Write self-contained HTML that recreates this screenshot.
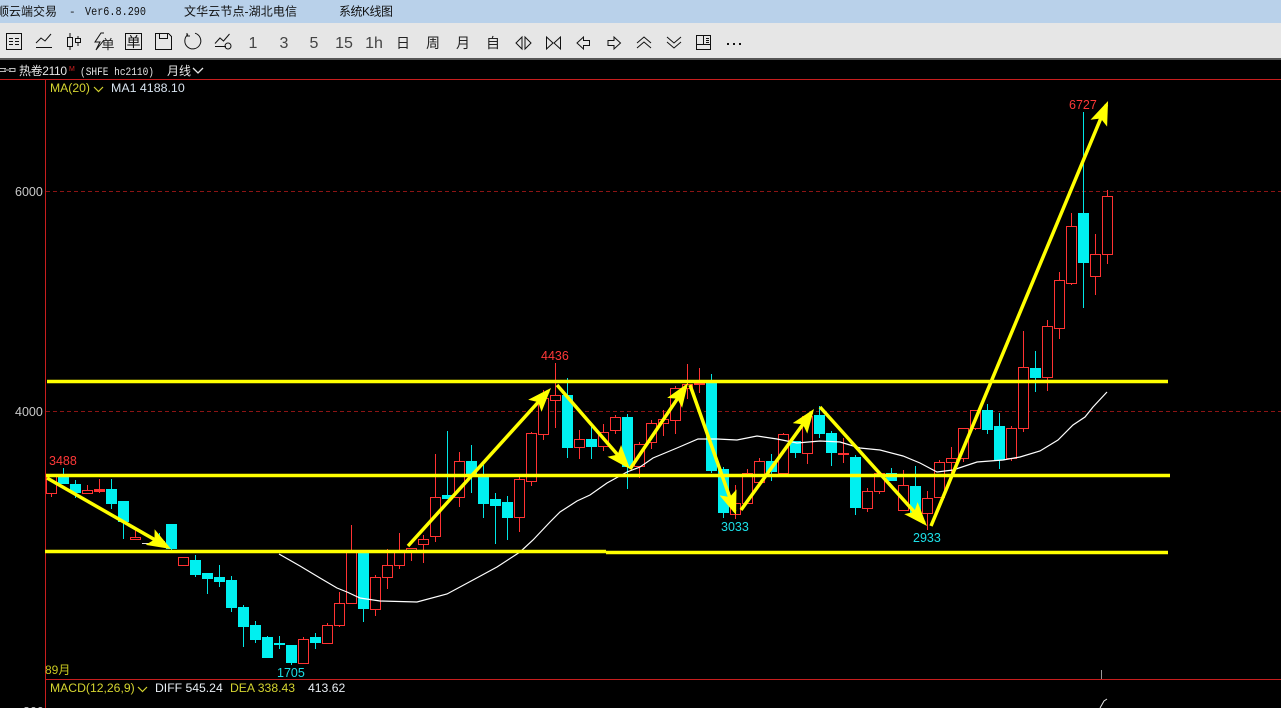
<!DOCTYPE html>
<html><head><meta charset="utf-8"><style>
html,body{margin:0;padding:0;background:#000;width:1281px;height:708px;overflow:hidden}
svg{display:block;font-family:"Liberation Sans","Noto Sans CJK SC",sans-serif}
</style></head><body>
<svg width="1281" height="708" viewBox="0 0 1281 708" xmlns="http://www.w3.org/2000/svg">
<defs><marker id="a" markerUnits="userSpaceOnUse" markerWidth="30" markerHeight="24" refX="20" refY="12" orient="auto"><path d="M0 3L24 12L0 21L5 12z" fill="#ff0"/></marker></defs>
<rect width="1281" height="708" fill="#000"/>
<rect width="1281" height="23" fill="#b9d1ea"/>
<rect y="23" width="1281" height="35" fill="#e6e6e6"/>
<rect y="58" width="1281" height="2" fill="#555"/>
<g font-size="12" fill="#111">
<text x="-3" y="15.500">顺云端交易</text>
<text x="69" y="15" font-family="Liberation Mono,monospace" font-size="11">-</text>
<text x="85" y="15" font-family="Liberation Mono,monospace" font-size="11.500" textLength="61" lengthAdjust="spacingAndGlyphs">Ver6.8.290</text>
<text x="184" y="15.500" textLength="113">文华云节点-湖北电信</text>
<text x="339" y="15.500" textLength="54">系统K线图</text>
</g>
<!-- toolbar icons -->
<g fill="none" stroke="#111" stroke-width="1" shape-rendering="crispEdges">
<path d="M6.500 33.500h15v16h-15zM9 38.500h4M15 38.500h4M9 41.500h4M15 41.500h4M9 44.500h4M15 44.500h4"/>
<path d="M36 47.500h16"/>
<path d="M67.500 37.500h5v9h-5zM70 33v4M70 46v4M75.500 38.500h5v4h-5zM78 36v2M78 43v3"/>
<path d="M125.500 33.500h16v16h-16zM155.500 33.500h13l3 3v13h-16zM159.500 33.500v5h8v-5"/>
<path d="M215 46.500h11M696.500 35.500h14v14h-14zM703.500 36v8M697 44.500h14M706 38.500h3M706 40.500h3M706 42.500h3"/>
</g>
<g fill="none" stroke="#111" stroke-width="1">
<path d="M36 43l5-5 4 3 6-7"/>
<path d="M104 33h-3l-6 9h5l-4 8l8-10"/>
<path d="M188 34.500A8 8 0 1 0 195 33.200M187 33v3h3"/>
<path d="M215 43.500l5-5.500 3.500 3 6-7"/>
<circle cx="228" cy="46" r="3"/>
<path d="M522 37l-6 6 6 6zM525 37l6 6-6 6z"/>
<path d="M546.500 37l6.500 6-6.500 6zM560.500 37l-6.500 6 6.500 6z"/>
<path d="M577 43l6.500-6v3.500h6v5h-6v3.500z"/>
<path d="M620.500 43l-6.500-6v3.500h-6v5h6v3.500z"/>
<path d="M637 43l7-6 7 6M637 48l7-6 7 6"/>
<path d="M667 37l7 6 7-6M667 42l7 6 7-6"/>
</g>
<g fill="#111"><rect x="727" y="43" width="2" height="2"/><rect x="733" y="43" width="2" height="2"/><rect x="739" y="43" width="2" height="2"/></g>
<g fill="#444" font-size="16" text-anchor="middle">
<text x="108" y="49" font-size="13" fill="#222">单</text>
<text x="133.500" y="47" font-size="14" fill="#111">单</text>
<text x="253" y="48">1</text><text x="284" y="48">3</text><text x="314" y="48">5</text>
<text x="344" y="48">15</text><text x="374" y="48">1h</text>
<text x="403" y="48" font-size="14" fill="#222">日</text><text x="433" y="48" font-size="14" fill="#222">周</text>
<text x="463" y="48" font-size="14" fill="#222">月</text><text x="493" y="48" font-size="14" fill="#222">自</text>
</g>
<!-- header / panel frame -->
<g fill="#e6e6e6" font-size="12">
<path d="M0 68.500h6M0 71.500h6M4 70h7M9 68.500h6v3h-6" fill="none" stroke="#bbb"/>
<text x="19" y="75" textLength="48">热卷2110</text>
<text x="69" y="71" font-size="7" fill="#d02020">M</text>
<text x="80" y="75" font-family="Liberation Mono,monospace" font-size="11" textLength="74" lengthAdjust="spacingAndGlyphs">(SHFE hc2110)</text>
<text x="167" y="75">月线</text>
<path d="M193 68l5 5 5-5" fill="none" stroke="#e6e6e6" stroke-width="1.300"/>
</g>
<g fill="#c81e1e"><rect y="79" width="1281" height="1"/><rect x="45" y="79" width="1" height="629"/><rect x="45" y="679" width="1236" height="1"/></g>
<path d="M46 191.500H1281M46 411.500H1281" stroke="#8c1414" stroke-dasharray="4 3" fill="none"/>
<!-- wicks -->
<path fill="none" stroke="#00e6e6" d="M63.500 468V484M75.500 480V498M111.500 479V509M123.500 501V539M159.500 533V544M171.500 524V553M195.500 555V577M207.500 573V594M219.500 565V587M231.500 576V612M243.500 605V647M255.500 621V643M267.500 636V658M279.500 636V649M291.500 645V665M315.500 633V649M363.500 552V622M447.500 431V499M471.500 445V493M483.500 465V518M495.500 493V544M507.500 496V540M567.500 378V458M591.500 427V459M627.500 414V489M711.500 374V473M723.500 467V518M771.500 454V481M795.500 441V458M819.500 406V438M831.500 431V466M855.500 455V515M891.500 468V481M915.500 466V513M987.500 404V434M999.500 413V469M1035.500 351V392M1083.500 112V308"/>
<path fill="none" stroke="#ff3232" d="M51.500 475V497M87.500 485V494M99.500 479V493M135.500 527V539M303.500 637V663M327.500 623V643M339.500 592V627M351.500 525V603M375.500 575V616M387.500 549V589M399.500 533V569M411.500 548V561M423.500 535V563M435.500 454V542M459.500 452V507M519.500 477V532M531.500 432V486M543.500 390V440M555.500 363V428M579.500 430V459M603.500 424V451M615.500 415V434M639.500 442V478M651.500 420V449M663.500 410V436M675.500 386V434M687.500 364V399M699.500 368V393M735.500 485V519M747.500 469V503M759.500 458V482M783.500 433V474M807.500 416V464M843.500 438V463M867.500 488V512M879.500 473V494M903.500 470V510M927.500 491V530M939.500 460V497M951.500 447V475M963.500 428V462M975.500 410V430M1011.500 426V461M1023.500 331V432M1047.500 320V391M1059.500 272V339M1071.500 213V285M1095.500 234V295M1107.500 190V264"/>
<!-- red bodies -->
<path fill="#000" stroke="#ff3232" d="M46.500 475.500h10v18h-10zM82.500 490.500h10v3h-10zM130.500 537.500h10v2h-10zM178.500 557.500h10v8h-10zM298.500 639.500h10v24h-10zM322.500 625.500h10v18h-10zM334.500 603.500h10v22h-10zM346.500 551.500h10v52h-10zM370.500 577.500h10v32h-10zM382.500 565.500h10v12h-10zM394.500 552.500h10v13h-10zM406.500 548.500h10v4h-10zM418.500 539.500h10v5h-10zM430.500 497.500h10v39h-10zM454.500 461.500h10v36h-10zM514.500 479.500h10v38h-10zM526.500 433.500h10v48h-10zM538.500 398.500h10v36h-10zM550.500 395.500h10v5h-10zM574.500 439.500h10v8h-10zM598.500 432.500h10v14h-10zM610.500 417.500h10v13h-10zM634.500 444.500h10v22h-10zM646.500 423.500h10v19h-10zM658.500 419.500h10v4h-10zM670.500 388.500h10v32h-10zM682.500 384.500h10v4h-10zM694.500 383.500h10v1h-10zM730.500 503.500h10v11h-10zM742.500 473.500h10v30h-10zM754.500 461.500h10v21h-10zM778.500 434.500h10v39h-10zM802.500 416.500h10v37h-10zM838.500 453.500h10v1h-10zM862.500 491.500h10v17h-10zM874.500 473.500h10v18h-10zM898.500 485.500h10v25h-10zM922.500 498.500h10v15h-10zM934.500 462.500h10v35h-10zM946.500 458.500h10v4h-10zM958.500 428.500h10v30h-10zM970.500 410.500h10v18h-10zM1006.500 428.500h10v30h-10zM1018.500 367.500h10v61h-10zM1042.500 326.500h10v51h-10zM1054.500 280.500h10v48h-10zM1066.500 226.500h10v57h-10zM1090.500 254.500h10v22h-10zM1102.500 196.500h10v58h-10z"/>
<rect x="94" y="489" width="11" height="3" fill="#ff3232"/>
<rect x="142" y="543" width="11" height="1" fill="#ddd"/>
<!-- cyan bodies -->
<path fill="#00f0f0" d="M58 475h11v9h-11zM70 484h11v9h-11zM106 489h11v15h-11zM118 501h11v21h-11zM154 541h11v2h-11zM166 524h11v25h-11zM190 560h11v15h-11zM202 573h11v6h-11zM214 577h11v5h-11zM226 580h11v28h-11zM238 607h11v20h-11zM250 625h11v15h-11zM262 637h11v21h-11zM274 643h11v2h-11zM286 645h11v18h-11zM310 637h11v6h-11zM358 552h11v57h-11zM442 495h11v4h-11zM466 461h11v14h-11zM478 475h11v29h-11zM490 499h11v7h-11zM502 502h11v16h-11zM562 395h11v53h-11zM586 439h11v8h-11zM622 417h11v50h-11zM706 382h11v89h-11zM718 469h11v44h-11zM766 461h11v11h-11zM790 441h11v12h-11zM814 415h11v19h-11zM826 433h11v20h-11zM850 457h11v51h-11zM886 473h11v8h-11zM910 486h11v27h-11zM982 410h11v20h-11zM994 426h11v34h-11zM1030 368h11v10h-11zM1078 213h11v50h-11z"/>
<!-- MA -->
<path fill="none" stroke="#fff" stroke-width="1.200" d="M279 554L300 566L320 578L337 588L347 592L360 598L380 601L417 602L447 594L473 580L497 567L520 552L533 540L550 522L560 512L577 501L590 495L607 483L627 472L640 467L653 458L677 448L698 439L717 439L737 440L757 436L777 439L797 443L820 441L840 442L860 448L880 450L903 456L920 463L937 472L953 470L977 462L1003 460L1020 457L1040 451L1058 440L1073 425L1085 417L1093 407L1107 392"/>
<!-- yellow levels -->
<g fill="#ff0">
<rect x="47" y="379.750" width="1121" height="3.500"/>
<rect x="46" y="473.750" width="1124" height="3.500"/>
<rect x="45" y="549.750" width="561" height="3.500"/>
<rect x="606" y="550.750" width="562" height="3.500"/>
</g>
<!-- arrows -->
<g stroke="#ff0" stroke-width="3.500" fill="none">
<line x1="47" y1="478" x2="167.500" y2="547" marker-end="url(#a)"/>
<line x1="408" y1="546" x2="548.300" y2="391" marker-end="url(#a)"/>
<line x1="557" y1="385" x2="627.400" y2="466" marker-end="url(#a)"/>
<line x1="630" y1="469" x2="685.800" y2="386.300" marker-end="url(#a)"/>
<line x1="690" y1="385" x2="734.700" y2="511.200" marker-end="url(#a)"/>
<line x1="741" y1="510" x2="811.700" y2="412.200" marker-end="url(#a)"/>
<line x1="820" y1="407" x2="924.300" y2="523" marker-end="url(#a)"/>
<line x1="931" y1="526" x2="1106.500" y2="104.700" marker-end="url(#a)"/>
</g>
<!-- labels -->
<g font-size="12.500">
<g fill="#ff3838">
<text x="49" y="465">3488</text><text x="541" y="360">4436</text><text x="1069" y="109">6727</text>
</g>
<g fill="#1ce0e8">
<text x="277" y="677">1705</text><text x="721" y="531">3033</text><text x="913" y="542">2933</text>
</g>
<g fill="#c8c8c8">
<text x="15" y="196">6000</text><text x="15" y="416">4000</text>
<text x="23" y="716">800</text>
</g>
<text x="45" y="674" fill="#c8c820" font-size="12">89月</text>
<text x="50" y="92" fill="#d4d430" font-size="12.200">MA(20)</text>
<text x="111" y="92" fill="#d8e4f0" font-size="12.400">MA1 4188.10</text>
<text x="50" y="692" fill="#d4d430" font-size="12.200">MACD(12,26,9)</text>
<text x="155" y="692" fill="#e8eef4" font-size="12.200">DIFF 545.24</text>
<text x="230" y="692" fill="#d4d430" font-size="12.200">DEA 338.43</text>
<text x="308" y="692" fill="#e8eef4" font-size="12.200">413.62</text>
</g>
<path d="M94 87l4.500 4.500 4.500-4.500M138 687l4.500 4.500 4.500-4.500" fill="none" stroke="#d4d430" stroke-width="1.200"/>
<rect x="1101" y="670" width="1" height="9" fill="#999"/>
<path d="M1100 708L1104 701L1107 699" fill="none" stroke="#e8e8e8"/>
</svg>
</body></html>
